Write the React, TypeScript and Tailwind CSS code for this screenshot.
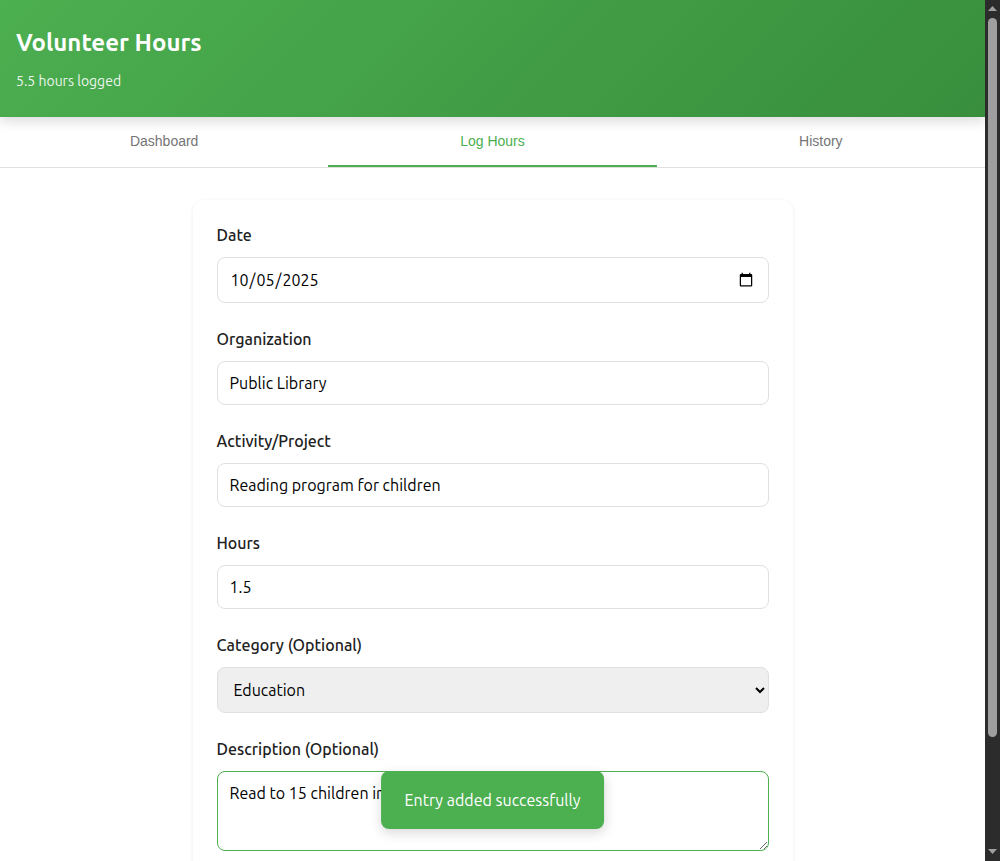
import React, { useState } from "react";

const tabs = ["Dashboard", "Log Hours", "History"];

const control =
  "block w-full rounded-lg border border-[#e0e0e0] px-3 text-base text-black outline-none focus:border-[#4caf50]";

function Field({ id, label, children }: { id: string; label: string; children: React.ReactNode }) {
  return (
    <div className="flex flex-col gap-[9px]">
      <label htmlFor={id} className="text-base leading-[25px] font-medium text-[#212121]">
        {label}
      </label>
      {children}
    </div>
  );
}

function ScrollRail() {
  return (
    <div aria-hidden="true" className="flex w-[15px] shrink-0 flex-col items-center bg-[#2c2c2c]">
      <svg className="h-[18px] w-[15px] shrink-0" viewBox="0 0 15 18" fill="#9f9f9f">
        <path d="M7.5 6 12 11H3z" />
      </svg>
      <div className="flex w-[9px] flex-1 flex-col">
        <div className="h-[87%] rounded-full bg-[#9f9f9f]" />
      </div>
      <svg className="h-[17px] w-[15px] shrink-0" viewBox="0 0 15 17" fill="#9f9f9f">
        <path d="M3 5h9l-4.500 5z" />
      </svg>
    </div>
  );
}

export default function App() {
  const [active, setActive] = useState("Log Hours");

  return (
    <div className="flex h-screen bg-white font-['Ubuntu','Noto_Sans',sans-serif] text-[#212121]">
      <div className="relative min-w-0 flex-1 overflow-hidden">
        <div className="h-full overflow-y-auto [scrollbar-width:none]">
          <header className="relative bg-linear-[135deg,#4caf50,#388e3c] px-4 py-6 text-white shadow-[0_4px_12px_rgba(0,0,0,0.15)]">
            <h1 className="mb-2 text-2xl leading-[38px] font-semibold">Volunteer Hours</h1>
            <p className="text-sm leading-[23px] opacity-90">5.5 hours logged</p>
          </header>

          <nav className="flex border-b border-[#e0e0e0]">
            {tabs.map((tab) => (
              <button
                key={tab}
                type="button"
                onClick={() => setActive(tab)}
                className={
                  tab === active
                    ? "h-[50px] flex-1 border-b-2 border-[#4caf50] font-['Liberation_Sans',sans-serif] text-sm text-[#4caf50]"
                    : "h-[50px] flex-1 border-b-2 border-transparent font-['Liberation_Sans',sans-serif] text-sm text-[#757575]"
                }
              >
                {tab}
              </button>
            ))}
          </nav>

          <main className="px-4 py-8">
            <form className="mx-auto flex max-w-[600px] flex-col gap-6 rounded-xl bg-white px-6 pt-[23px] pb-24 shadow-[0_1px_4px_rgba(0,0,0,0.08)]">
              <Field id="date" label="Date">
                <input id="date" type="date" defaultValue="2025-10-05" className={`${control} h-[46px]`} />
              </Field>
              <Field id="organization" label="Organization">
                <input id="organization" type="text" defaultValue="Public Library" className={`${control} h-11`} />
              </Field>
              <Field id="activity" label="Activity/Project">
                <input id="activity" type="text" defaultValue="Reading program for children" className={`${control} h-11`} />
              </Field>
              <Field id="hours" label="Hours">
                <input id="hours" type="number" step="0.5" defaultValue="1.5" className={`${control} h-11`} />
              </Field>
              <Field id="category" label="Category (Optional)">
                <select id="category" defaultValue="Education" className={`${control} h-[46px] bg-[#efefef]`}>
                  <option>Education</option>
                </select>
              </Field>
              <Field id="description" label="Description (Optional)">
                <textarea
                  id="description"
                  defaultValue="Read to 15 children in"
                  className="block h-20 w-full resize-y rounded-lg border border-[#4caf50] px-3 py-[11px] text-base leading-5 text-black outline-none"
                />
              </Field>
            </form>
          </main>
        </div>

        <div
          role="status"
          className="absolute bottom-8 left-1/2 -translate-x-1/2 rounded-lg bg-[#4caf50] px-6 py-4 text-base leading-[26px] whitespace-nowrap text-white shadow-[0_4px_12px_rgba(0,0,0,0.15)]"
        >
          Entry added successfully
        </div>
      </div>
      <ScrollRail />
    </div>
  );
}
